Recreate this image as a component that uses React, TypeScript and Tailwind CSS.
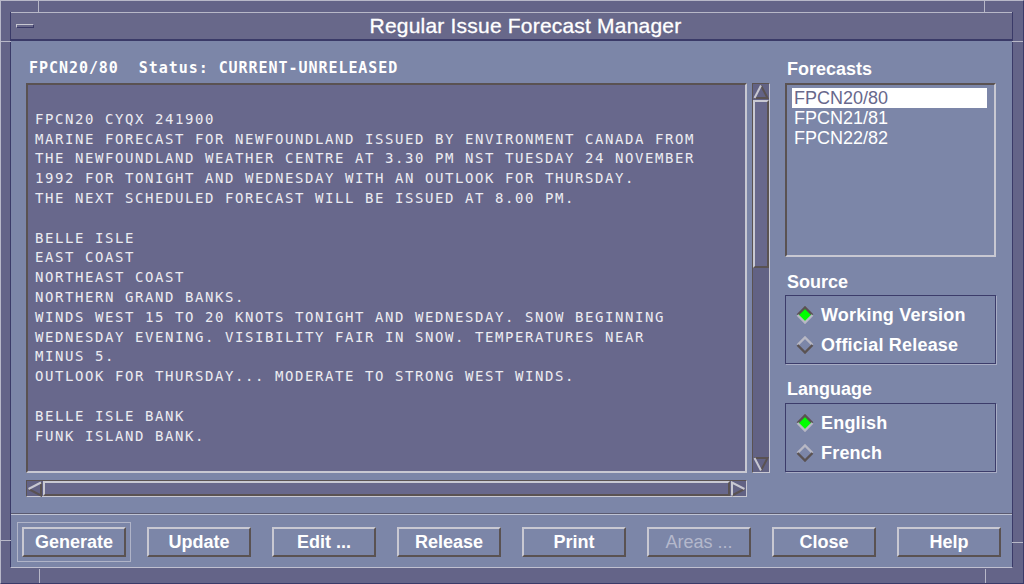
import type { ReactNode } from "react";

const LIGHT = "#c8c8d2";
const DARK = "#5a5252";

const forecastLines = [
  "",
  "FPCN20 CYQX 241900",
  "MARINE FORECAST FOR NEWFOUNDLAND ISSUED BY ENVIRONMENT CANADA FROM",
  "THE NEWFOUNDLAND WEATHER CENTRE AT 3.30 PM NST TUESDAY 24 NOVEMBER",
  "1992 FOR TONIGHT AND WEDNESDAY WITH AN OUTLOOK FOR THURSDAY.",
  "THE NEXT SCHEDULED FORECAST WILL BE ISSUED AT 8.00 PM.",
  "",
  "BELLE ISLE",
  "EAST COAST",
  "NORTHEAST COAST",
  "NORTHERN GRAND BANKS.",
  "WINDS WEST 15 TO 20 KNOTS TONIGHT AND WEDNESDAY. SNOW BEGINNING",
  "WEDNESDAY EVENING. VISIBILITY FAIR IN SNOW. TEMPERATURES NEAR",
  "MINUS 5.",
  "OUTLOOK FOR THURSDAY... MODERATE TO STRONG WEST WINDS.",
  "",
  "BELLE ISLE BANK",
  "FUNK ISLAND BANK.",
];

const buttons = ["Generate", "Update", "Edit ...", "Release", "Print", "Areas ...", "Close", "Help"];

function Arrow({ dir }: { dir: "up" | "down" | "left" | "right" }) {
  // raised triangle: lit edge light, shadow edges dark
  const shapes = {
    up: { light: "1.5,14 8,1.5", dark: "8,1.5 14.5,14 1.5,14" },
    down: { light: "1.5,2 8,14.5", dark: "8,14.5 14.5,2 1.5,2" },
    left: { light: "14,1.5 1.5,8", dark: "1.5,8 14,14.5 14,1.5" },
    right: { light: "2,14.5 2,1.5 14.5,8", dark: "14.5,8 2,14.5" },
  }[dir];
  return (
    <svg width="16" height="16" viewBox="0 0 16 16" className="shrink-0">
      <polyline points={shapes.dark} fill="none" stroke={DARK} strokeWidth="2" />
      <polyline points={shapes.light} fill="none" stroke={LIGHT} strokeWidth="2" />
    </svg>
  );
}

function Diamond({ on }: { on: boolean }) {
  const top = on ? DARK : "#b8b8c4";
  const bottom = on ? "#b8b8c4" : DARK;
  return (
    <svg width="18" height="18" viewBox="0 0 18 18" className="shrink-0">
      <polygon points="9,1.5 16.5,9 9,16.5 1.5,9" fill={on ? "#00ff00" : "none"} />
      <polyline points="1.5,9 9,1.5 16.5,9" fill="none" stroke={top} strokeWidth="2.4" />
      <polyline points="1.5,9 9,16.5 16.5,9" fill="none" stroke={bottom} strokeWidth="2.4" />
    </svg>
  );
}

function RadioBox({ items, selected }: { items: string[]; selected: number }) {
  return (
    <div className="border border-[#3c3c6a] shadow-[1px_1px_0_#a8acc4] pt-[4px] pb-[3px] pl-[10px]">
      {items.map((item, i) => (
        <div key={item} className="flex h-[30px] items-center gap-[7px]">
          <Diamond on={i === selected} />
          <span className="text-[18px] font-bold tracking-[0.2px] text-white">{item}</span>
        </div>
      ))}
    </div>
  );
}

function Label({ children, top }: { children: ReactNode; top: string }) {
  return <div className={`${top} text-[18px] font-bold leading-[18px] text-white pl-[2px]`}>{children}</div>;
}

export default function App() {
  return (
    <div className="relative h-[584px] w-[1024px] overflow-hidden border-t border-l border-t-[#b8b8c8] border-l-[#b8b8c8] border-r border-b border-r-[#3a3a68] border-b-[#3a3a68] bg-[#646488] pt-[11px] pl-[9px] pr-[10px] pb-[15px] font-['Liberation_Sans',Arial,sans-serif]">
      {/* frame corner dividers */}
      <span className="absolute left-[37px] top-0 h-[40px] w-px bg-[#b8b8c8]" />
      <span className="absolute left-0 top-[40px] h-px w-[10px] bg-[#b8b8c8]" />
      <span className="absolute left-[983px] top-0 h-[11px] w-px bg-[#b8b8c8]" />
      <span className="absolute right-0 top-[40px] h-px w-[11px] bg-[#b8b8c8]" />
      <span className="absolute left-[38px] bottom-0 h-[14px] w-px bg-[#b8b8c8]" />
      <span className="absolute left-0 top-[539px] h-px w-[10px] bg-[#b8b8c8]" />
      <span className="absolute left-[984px] bottom-0 h-[14px] w-px bg-[#b8b8c8]" />
      <span className="absolute right-0 top-[541px] h-px w-[11px] bg-[#b8b8c8]" />

      <div className="flex h-full flex-col border-l border-b border-r border-l-[#3a3a68] border-b-[#c0c0d0] border-r-[#3a3a68]">
        {/* title bar */}
        <div className="relative flex h-[29px] items-center justify-center border-t border-b-2 border-t-[#b8b8c8] border-b-[#3a3a68] bg-[#68688a]">
          <div className="absolute left-[5px] top-[11px] h-[4px] w-[18px] border border-t-[#c8c8d2] border-l-[#c8c8d2] border-b-[#3a3a68] border-r-[#3a3a68]" />
          <span className="pl-[28px] text-[21px] leading-[24px] tracking-[0.2px] text-white [-webkit-text-stroke:0.3px_white]">Regular Issue Forecast Manager</span>
        </div>

        {/* main panel */}
        <div className="flex flex-1 flex-col bg-[#7c86a8]">
          <div className="flex pl-[15px]">
            <div className="flex w-[744px] flex-col">
              <div className="h-[42px] pt-[18px] pl-[3px] font-['DejaVu_Sans_Mono',monospace] text-[15px] font-bold leading-[18px] tracking-[0.95px] text-white whitespace-pre">
                FPCN20/80  Status: CURRENT-UNRELEASED
              </div>
              <div className="flex h-[390px] gap-[5px]">
                <div className="w-[721px] border-2 border-t-[#5a5252] border-l-[#5a5252] border-b-[#c8c8d2] border-r-[#c8c8d2] bg-[#68688c] pt-[5px] pl-[7px] font-['DejaVu_Sans_Mono',monospace] text-[14px] leading-[19.8px] tracking-[1.57px] text-[#ececf2]">
                  {forecastLines.map((line, i) => (
                    <div key={i} className="h-[19.8px] whitespace-pre">{line}</div>
                  ))}
                </div>
                <div className="flex w-[18px] flex-col border border-t-[#5a5252] border-l-[#5a5252] border-b-[#c8c8d2] border-r-[#c8c8d2] bg-[#626284]">
                  <Arrow dir="up" />
                  <div className="h-[168px] border-2 border-t-[#c8c8d2] border-l-[#c8c8d2] border-b-[#5a5252] border-r-[#5a5252] bg-[#68688c]" />
                  <div className="flex-1" />
                  <Arrow dir="down" />
                </div>
              </div>
              <div className="mt-[7px] flex h-[17px] w-[721px] border border-t-[#5a5252] border-l-[#5a5252] border-b-[#c8c8d2] border-r-[#c8c8d2] bg-[#626284]">
                <Arrow dir="left" />
                <div className="flex-1 border-2 border-t-[#c8c8d2] border-l-[#c8c8d2] border-b-[#5a5252] border-r-[#5a5252] bg-[#68688c]" />
                <Arrow dir="right" />
              </div>
            </div>

            <div className="ml-[15px] flex w-[211px] flex-col">
              <Label top="h-[42px] pt-[19px]">Forecasts</Label>
              <div className="h-[174px] border-2 border-t-[#5a5252] border-l-[#5a5252] border-b-[#c8c8d2] border-r-[#c8c8d2] pt-[3px] pl-[5px] pr-[7px] text-[18px] leading-[20px] text-white">
                <div className="h-[20px] bg-white pl-[2px] text-[#68688c]">FPCN20/80</div>
                <div className="h-[20px] pl-[2px]">FPCN21/81</div>
                <div className="h-[20px] pl-[2px]">FPCN22/82</div>
              </div>
              <Label top="h-[38px] pt-[16px]">Source</Label>
              <RadioBox items={["Working Version", "Official Release"]} selected={0} />
              <Label top="h-[39px] pt-[16px]">Language</Label>
              <RadioBox items={["English", "French"]} selected={0} />
            </div>
          </div>

          <div className="mt-[16px] h-[2px] border-t border-b border-t-[#5a5a70] border-b-[#c0c4d4]" />

          <div className="mt-[7px] flex h-[40px] items-center gap-[21px] pl-[11px]">
            {buttons.map((b, i) => {
              const btn = (
                <div className={`flex h-[30px] w-[104px] items-center justify-center border-2 border-t-[#c8c8d2] border-l-[#c8c8d2] border-b-[#5a5252] border-r-[#5a5252] text-[18px] ${b === "Areas ..." ? "font-normal text-[#b4b8cc]" : "font-bold text-white"}`}>
                  {b}
                </div>
              );
              return i === 0 ? (
                <div key={b} className="-mx-[5px] border border-[#b0b4c8] p-[4px]">{btn}</div>
              ) : (
                <div key={b}>{btn}</div>
              );
            })}
          </div>
        </div>
      </div>
    </div>
  );
}
